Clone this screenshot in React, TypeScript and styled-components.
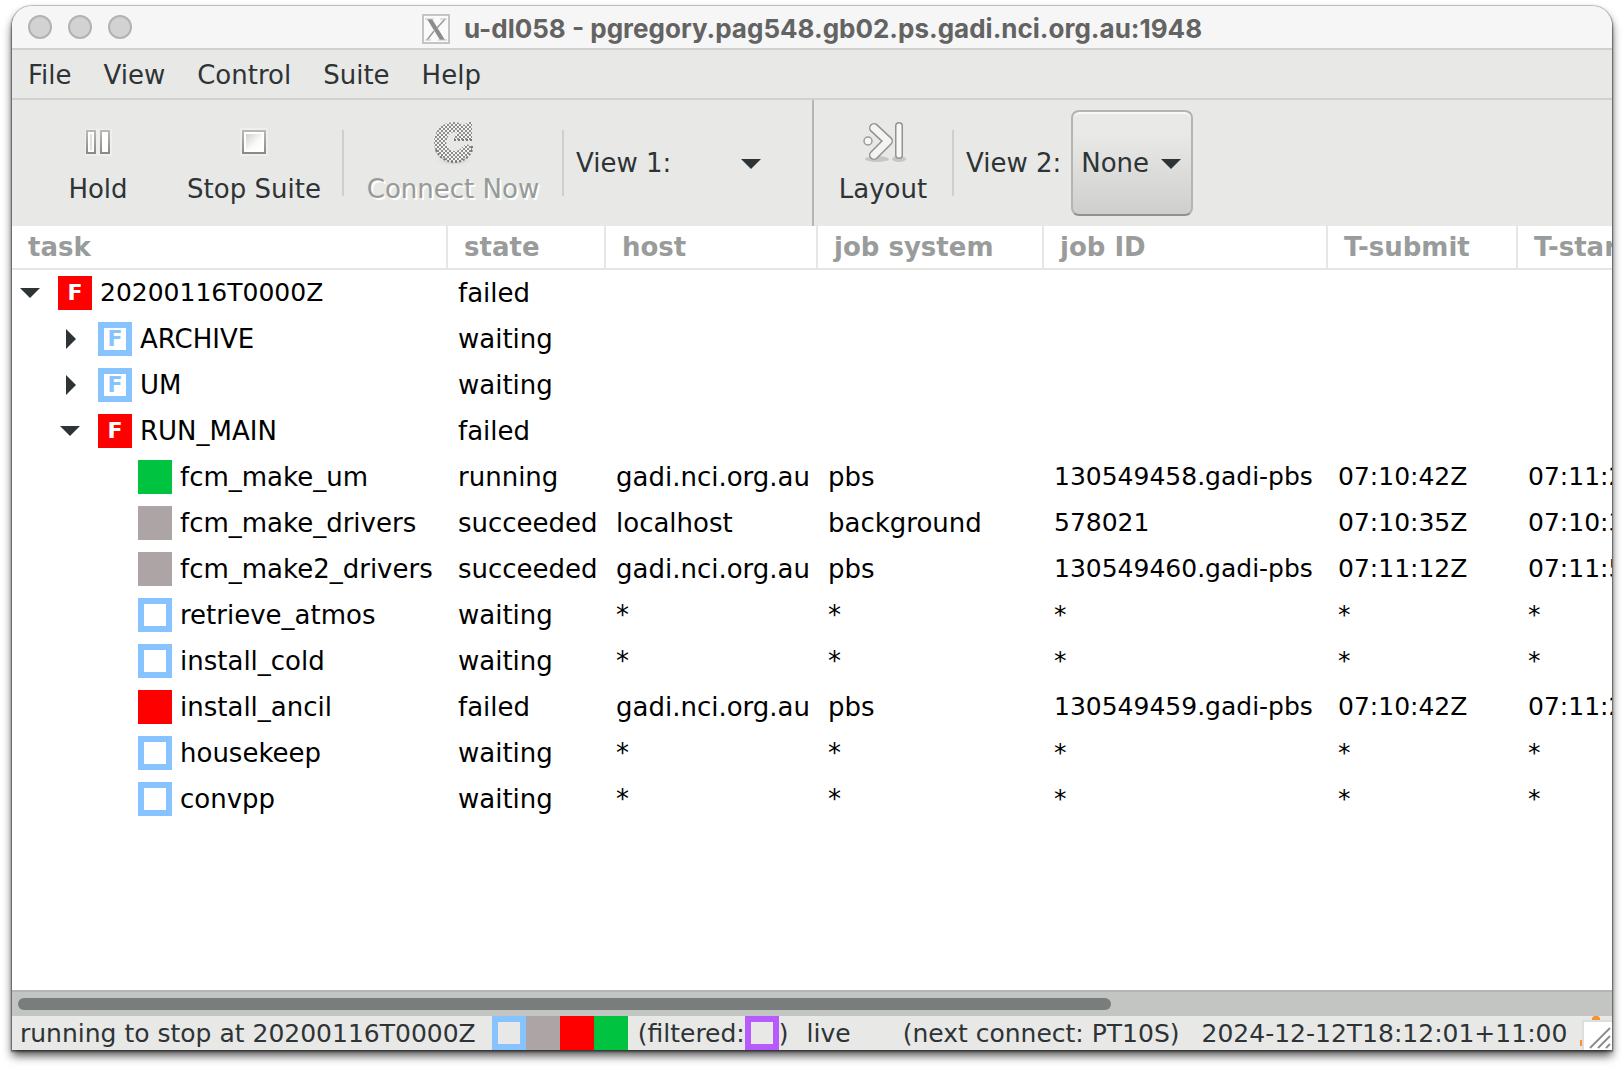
import React, { useState } from 'react';
import styled, { createGlobalStyle } from 'styled-components';

const SANS = '"DejaVu Sans", Verdana, sans-serif';

const GlobalStyle = createGlobalStyle`
  *, *::before, *::after { box-sizing: border-box; }
  body { margin: 0; background: #ffffff; font: 26px/30px ${SANS}; color: #2e3436; }
  button, select { font: inherit; color: inherit; margin: 0; }
`;

const Desktop = styled.div`
  display: flex;
  min-height: 100vh;
  padding: 6px 12px 18px;
  overflow: hidden;
`;

const Window = styled.main`
  flex: 1;
  min-width: 0;
  display: flex;
  flex-direction: column;
  background: #ffffff;
  border-radius: 20px 20px 0 0;
  box-shadow: 0 0 0 1px rgba(0, 0, 0, 0.12), 0 1px 2px 1px rgba(0, 0, 0, 0.4),
    0 6px 10px rgba(0, 0, 0, 0.65);
`;

const TitleBar = styled.header`
  display: grid;
  grid-template-columns: 1fr auto 1fr;
  align-items: center;
  height: 44px;
  padding: 0 16px;
  background: #f6f6f6;
  border-bottom: 2px solid #d0d0ce;
  border-radius: 20px 20px 0 0;
`;

const Lights = styled.div`
  display: flex;
  gap: 16px;
`;

const Light = styled.button`
  width: 24px;
  height: 24px;
  padding: 0;
  border: 2px solid #b2b2b2;
  border-radius: 50%;
  background: #d2d2d2;
`;

const Title = styled.h1`
  display: flex;
  align-items: center;
  gap: 14px;
  margin: 0;
  padding-top: 4px;
  font: 700 26px/30px Inter, "Liberation Sans", sans-serif;
  color: #636363;
  white-space: nowrap;
`;

const MenuBar = styled.nav`
  display: flex;
  height: 50px;
  background: #e8e8e6;
  border-bottom: 2px solid #d0d0ce;
`;

const MenuItem = styled.button`
  padding: 2px 16px 0;
  border: 0;
  background: transparent;
`;

const Toolbars = styled.div`
  display: grid;
  grid-template-columns: 1fr 1fr;
  height: 126px;
  background: #e8e8e6;
`;

const Toolbar = styled.div`
  display: flex;
  align-items: center;
  min-width: 0;
  padding: 0 8px;

  & + & {
    padding-left: 10px;
    border-left: 2px solid #b6b6b3;
  }
`;

const Tool = styled.button<{ $width: number }>`
  display: flex;
  flex-direction: column;
  align-items: center;
  gap: 8px;
  width: ${(p) => p.$width}px;
  padding: 0 0 4px;
  border: 0;
  background: transparent;
  white-space: nowrap;

  &:disabled {
    color: #969a98;
    text-shadow: 2px 2px 0 #ffffff;
  }
`;

const Divider = styled.span`
  width: 2px;
  height: 66px;
  margin: 0 10px;
  background: #cfcfcc;
`;

const ViewLabel = styled.label`
  padding: 0 10px 0 2px;
  white-space: nowrap;
`;

const SelectBox = styled.div<{ $width: number }>`
  position: relative;
  width: ${(p) => p.$width}px;
  height: 106px;

  svg {
    position: absolute;
    top: 50%;
    right: 12px;
    margin-top: -4px;
    pointer-events: none;
  }
`;

const ViewSelect = styled.select<{ $flat?: boolean }>`
  width: 100%;
  height: 100%;
  padding: 0 8px;
  appearance: none;
  border: 2px solid ${(p) => (p.$flat ? 'transparent' : '#b4b4b1')};
  border-bottom-color: ${(p) => (p.$flat ? 'transparent' : '#92928c')};
  border-radius: 8px;
  background: ${(p) => (p.$flat ? 'transparent' : 'linear-gradient(#e9e9e7 20%, #cfcfcd)')};
  box-shadow: ${(p) => (p.$flat ? 'none' : 'inset 0 2px 0 #f8f8f7')};
`;

const TreeArea = styled.section`
  flex: 1;
  overflow: hidden;
`;

const Tree = styled.table`
  width: 1696px;
  table-layout: fixed;
  border-collapse: separate;
  border-spacing: 0;
  color: #000000;
`;

const HeadCell = styled.th<{ $width: number }>`
  width: ${(p) => p.$width}px;
  height: 44px;
  padding: 0 16px;
  border-right: 2px solid #e6e6e5;
  border-bottom: 2px solid #e6e6e5;
  color: #999c9b;
  text-align: left;
  white-space: nowrap;
`;

const Cell = styled.td<{ $numeric?: boolean }>`
  height: 46px;
  padding: 0 0 0 10px;
  font-size: ${(p) => (p.$numeric ? 25 : 26)}px;
  line-height: 46px;
  white-space: nowrap;
`;

const TaskCell = styled.td<{ $depth: number }>`
  height: 46px;
  padding: 0 0 0 ${(p) => p.$depth * 40}px;
  font-size: ${(p) => (p.$depth === 0 ? 25 : 26)}px;
  line-height: 46px;
  white-space: nowrap;
`;

const TaskLine = styled.div`
  display: flex;
  align-items: center;
  gap: 8px;
`;

const Expander = styled.button`
  display: flex;
  justify-content: center;
  width: 38px;
  padding: 0 2px 0 0;
  border: 0;
  background: transparent;
`;

const Indent = styled.span`
  width: 38px;
`;

const Swatch = styled.span<{ $color: string; $hollow?: boolean }>`
  display: flex;
  flex: none;
  justify-content: center;
  align-items: center;
  width: 34px;
  height: 34px;
  border: 6px solid ${(p) => p.$color};
  background: ${(p) => (p.$hollow ? 'transparent' : p.$color)};
  color: ${(p) => (p.$hollow ? p.$color : '#ffffff')};
  font-size: 22px;
  font-weight: 700;
  line-height: 22px;
`;

const ScrollTrack = styled.div`
  height: 26px;
  padding: 6px;
  background: #c3c5c3;
  border-top: 2px solid #b6b6b0;
`;

const ScrollThumb = styled.div`
  width: 68.8%;
  height: 12px;
  border-radius: 6px;
  background: #797d7c;
`;

const StatusBar = styled.footer`
  display: flex;
  align-items: center;
  height: 34px;
  padding-left: 8px;
  background: #e8e8e6;
  font-size: 25px;
  white-space: pre;
`;

const StatusText = styled.span`
  padding-top: 2px;
`;

const Swatches = styled.span`
  display: flex;
  margin: 0 10px 0 16px;
`;

const Live = styled(StatusText)`
  margin: 0 52px 0 18px;
`;

const Clock = styled.time`
  margin-left: 22px;
  padding-top: 2px;
`;

const Corner = styled.span`
  display: flex;
  margin-left: auto;
`;

type State = 'running' | 'succeeded' | 'failed' | 'waiting';

const STATE_COLORS: Record<State, string> = {
  running: '#00c340',
  succeeded: '#ada5a5',
  failed: '#ff0000',
  waiting: '#87c4ff',
};

interface Task {
  name: string;
  state: State;
  depth: number;
  open?: boolean;
  jobs?: string[];
}

const NONE = ['*', '*', '*', '*', '*'];

const TASKS: Task[] = [
  { name: '20200116T0000Z', state: 'failed', depth: 0, open: true },
  { name: 'ARCHIVE', state: 'waiting', depth: 1, open: false },
  { name: 'UM', state: 'waiting', depth: 1, open: false },
  { name: 'RUN_MAIN', state: 'failed', depth: 1, open: true },
  { name: 'fcm_make_um', state: 'running', depth: 2, jobs: ['gadi.nci.org.au', 'pbs', '130549458.gadi-pbs', '07:10:42Z', '07:11:22Z'] },
  { name: 'fcm_make_drivers', state: 'succeeded', depth: 2, jobs: ['localhost', 'background', '578021', '07:10:35Z', '07:10:36Z'] },
  { name: 'fcm_make2_drivers', state: 'succeeded', depth: 2, jobs: ['gadi.nci.org.au', 'pbs', '130549460.gadi-pbs', '07:11:12Z', '07:11:52Z'] },
  { name: 'retrieve_atmos', state: 'waiting', depth: 2, jobs: NONE },
  { name: 'install_cold', state: 'waiting', depth: 2, jobs: NONE },
  { name: 'install_ancil', state: 'failed', depth: 2, jobs: ['gadi.nci.org.au', 'pbs', '130549459.gadi-pbs', '07:10:42Z', '07:11:22Z'] },
  { name: 'housekeep', state: 'waiting', depth: 2, jobs: NONE },
  { name: 'convpp', state: 'waiting', depth: 2, jobs: NONE },
];

const COLUMNS: [string, number][] = [
  ['task', 436],
  ['state', 158],
  ['host', 212],
  ['job system', 226],
  ['job ID', 284],
  ['T-submit', 190],
  ['T-start', 190],
];

const Caret = ({ open = true }: { open?: boolean }) => (
  <svg width="20" height="20" viewBox="0 0 20 20" fill="#2e3436" aria-hidden="true">
    <path d={open ? 'M0 5H20L10 15Z' : 'M6 0V20L16 10Z'} />
  </svg>
);

const DownArrow = () => (
  <svg width="20" height="10" viewBox="0 0 20 10" fill="#2e3436" aria-hidden="true">
    <path d="M0 0H20L10 10Z" />
  </svg>
);

const XLogo = () => (
  <svg width="28" height="30" viewBox="0 0 28 30" aria-hidden="true">
    <rect x="1" y="1" width="26" height="28" fill="#fafafa" stroke="#c4c4c4" strokeWidth="2" />
    <path d="M5 5H10L23 26H18Z" fill="#8c8c8c" />
    <path d="M23 5L15 14M12 17L5 26" stroke="#999999" strokeWidth="1.5" />
    <path d="M3 5H12M18 5H25M3 26H9M16 26H25" stroke="#c4c4c4" />
  </svg>
);

const PauseIcon = () => (
  <svg width="48" height="48" viewBox="0 0 48 48" aria-hidden="true">
    <defs>
      <linearGradient id="edge" x1="0" y1="0" x2="0" y2="1">
        <stop offset="0" stopColor="#b9b9b4" />
        <stop offset="1" stopColor="#8b8b85" />
      </linearGradient>
    </defs>
    <path d="M11 11H38V38H11Z" fill="#efefed" />
    <rect x="13" y="13" width="8" height="22" fill="#ffffff" stroke="url(#edge)" strokeWidth="2" />
    <rect x="27" y="13" width="8" height="22" fill="#ffffff" stroke="url(#edge)" strokeWidth="2" />
    <path d="M16 16H18V32H16Z" fill="#dededb" />
  </svg>
);

const StopIcon = () => (
  <svg width="48" height="48" viewBox="0 0 48 48" aria-hidden="true">
    <defs>
      <linearGradient id="face" x1="0" y1="0" x2="1" y2="1">
        <stop offset="0" stopColor="#d2d3ce" />
        <stop offset="0.6" stopColor="#fafafa" />
        <stop offset="1" stopColor="#ffffff" />
      </linearGradient>
    </defs>
    <path d="M10 10H38V38H10Z" fill="#efefed" />
    <rect x="13" y="13" width="22" height="22" fill="#ffffff" stroke="url(#edge)" strokeWidth="2" />
    <rect x="16" y="16" width="16" height="16" fill="url(#face)" />
  </svg>
);

const ReconnectIcon = () => (
  <svg width="48" height="48" viewBox="0 0 48 48" aria-hidden="true">
    <defs>
      <pattern id="checks" width="4" height="4" patternUnits="userSpaceOnUse">
        <path d="M0 0H4V4H0Z" fill="#f3f3f2" />
        <path d="M0 0H2V2H0ZM2 2H4V4H2Z" fill="#8d8d8a" />
      </pattern>
      <radialGradient id="ground">
        <stop offset="0" stopColor="#b4b4b1" />
        <stop offset="1" stopColor="#e8e8e6" stopOpacity="0" />
      </radialGradient>
    </defs>
    <ellipse cx="25" cy="43" rx="20" ry="5" fill="url(#ground)" />
    <path
      d="M43 4V22H25V18L29 15Q24 12 20 17Q15 24 19 30Q24 35 30 32L37 26L43 28V32Q38 44 25 44Q5 42 5 24Q6 6 24 4Q31 4 35 7L39 4Z"
      fill="url(#checks)"
    />
    <path d="M43 22H25M43 28V32Q38 44 25 44Q12 43 7 32" fill="none" stroke="#777774" strokeWidth="2" strokeDasharray="2 2" />
  </svg>
);

const LayoutIcon = () => (
  <svg width="48" height="48" viewBox="0 0 48 48" aria-hidden="true">
    <ellipse cx="18" cy="41" rx="12" ry="3" fill="#c6c6c3" />
    <ellipse cx="40" cy="41" rx="7" ry="3" fill="#c6c6c3" />
    <g fill="none" strokeLinecap="round" strokeLinejoin="round">
      <path d="M15 10L29 23L15 37" stroke="#92928e" strokeWidth="10" />
      <path d="M15 10L29 23L15 37" stroke="#f4f4f3" strokeWidth="7" />
      <path d="M40 8V37" stroke="#92928e" strokeWidth="8" />
      <path d="M40 8V37" stroke="#f7f7f6" strokeWidth="5" />
    </g>
    <circle cx="9" cy="23" r="4" fill="#f7f7f6" stroke="#9b9b97" strokeWidth="1.5" />
  </svg>
);

const SizeGrip = () => (
  <svg width="32" height="34" viewBox="0 0 32 34" aria-hidden="true">
    <path d="M12 4V2L14 0H18L20 2V4ZM0 24H2V30H0Z" fill="#f59435" />
    <path d="M2 4H32V34H2Z" fill="#dededb" />
    <path d="M4 6H32V34H4Z" fill="#ffffff" />
    <path d="M10 32L30 12M18 32L30 20M26 32L30 28" stroke="#8e8e8b" strokeWidth="2" />
  </svg>
);

const TaskRow = ({ task }: { task: Task }) => {
  const family = task.open !== undefined;
  const cells = task.jobs ?? ['', '', '', '', ''];
  return (
    <tr>
      <TaskCell $depth={task.depth}>
        <TaskLine>
          {family ? (
            <Expander aria-label={`Toggle ${task.name}`} aria-expanded={task.open}>
              <Caret open={task.open} />
            </Expander>
          ) : (
            <Indent />
          )}
          <Swatch $color={STATE_COLORS[task.state]} $hollow={task.state === 'waiting'}>
            {family && 'F'}
          </Swatch>
          {task.name}
        </TaskLine>
      </TaskCell>
      <Cell>{task.state}</Cell>
      {cells.map((value, i) => (
        <Cell key={i} $numeric={i > 1}>
          {value}
        </Cell>
      ))}
    </tr>
  );
};

export default function App() {
  const [view1, setView1] = useState('');
  const [view2, setView2] = useState('None');

  return (
    <>
      <GlobalStyle />
      <Desktop>
        <Window>
          <TitleBar>
            <Lights>
              <Light aria-label="Close" />
              <Light aria-label="Minimise" />
              <Light aria-label="Zoom" />
            </Lights>
            <Title>
              <XLogo />
              u-dl058 - pgregory.pag548.gb02.ps.gadi.nci.org.au:1948
            </Title>
          </TitleBar>

          <MenuBar>
            {['File', 'View', 'Control', 'Suite', 'Help'].map((name) => (
              <MenuItem key={name}>{name}</MenuItem>
            ))}
          </MenuBar>

          <Toolbars>
            <Toolbar>
              <Tool $width={156}>
                <PauseIcon />
                Hold
              </Tool>
              <Tool $width={156}>
                <StopIcon />
                Stop Suite
              </Tool>
              <Divider />
              <Tool $width={198} disabled>
                <ReconnectIcon />
                Connect Now
              </Tool>
              <Divider />
              <ViewLabel htmlFor="view1">View 1:</ViewLabel>
              <SelectBox $width={92}>
                <ViewSelect id="view1" $flat value={view1} onChange={(e) => setView1(e.target.value)}>
                  <option value=""></option>
                </ViewSelect>
                <DownArrow />
              </SelectBox>
            </Toolbar>
            <Toolbar>
              <Tool $width={118}>
                <LayoutIcon />
                Layout
              </Tool>
              <Divider />
              <ViewLabel htmlFor="view2">View 2:</ViewLabel>
              <SelectBox $width={122}>
                <ViewSelect id="view2" value={view2} onChange={(e) => setView2(e.target.value)}>
                  <option>None</option>
                </ViewSelect>
                <DownArrow />
              </SelectBox>
            </Toolbar>
          </Toolbars>

          <TreeArea>
            <Tree>
              <thead>
                <tr>
                  {COLUMNS.map(([name, width]) => (
                    <HeadCell key={name} $width={width} scope="col">
                      {name}
                    </HeadCell>
                  ))}
                </tr>
              </thead>
              <tbody>
                {TASKS.map((task) => (
                  <TaskRow key={task.name} task={task} />
                ))}
              </tbody>
            </Tree>
          </TreeArea>

          <ScrollTrack>
            <ScrollThumb />
          </ScrollTrack>

          <StatusBar>
            <StatusText>running to stop at 20200116T0000Z</StatusText>
            <Swatches>
              <Swatch $color={STATE_COLORS.waiting} $hollow />
              <Swatch $color={STATE_COLORS.succeeded} />
              <Swatch $color={STATE_COLORS.failed} />
              <Swatch $color={STATE_COLORS.running} />
            </Swatches>
            <StatusText>(filtered:</StatusText>
            <Swatch $color="#b65cff" $hollow />
            <StatusText>)</StatusText>
            <Live>live</Live>
            <StatusText>(next connect: PT10S)</StatusText>
            <Clock>2024-12-12T18:12:01+11:00</Clock>
            <Corner>
              <SizeGrip />
            </Corner>
          </StatusBar>
        </Window>
      </Desktop>
    </>
  );
}
